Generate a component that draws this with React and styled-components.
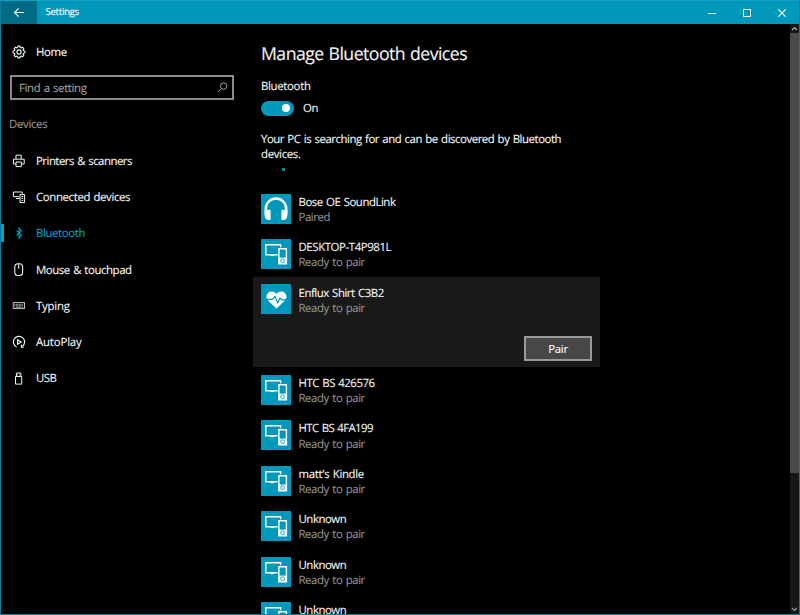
import React from 'react';
import styled, { createGlobalStyle, css } from 'styled-components';

const ACCENT = '#0099bc';

const GlobalStyle = createGlobalStyle`
  *, *::before, *::after { box-sizing: border-box; }
  html, body { margin: 0; padding: 0; background: #000; overflow: hidden; }
  body {
    font-family: "Open Sans", "Noto Sans", sans-serif;
    color: #f4f4f4;
    text-rendering: geometricPrecision;
  }
`;

const Window = styled.div`
  width: 800px;
  height: 615px;
  display: flex;
  flex-direction: column;
  background: #000;
  border: 1px solid #087f9b;
  border-top-color: #19a2c1;
  overflow: hidden;
`;

const TitleBar = styled.header`
  flex: none;
  display: flex;
  height: 23px;
  background: ${ACCENT};
`;

const BackButton = styled.button`
  width: 36px;
  padding: 0;
  border: 0;
  display: flex;
  align-items: center;
  justify-content: center;
  background: #006b84;
  color: #fff;
`;

const Text = styled.span`
  white-space: nowrap;
  letter-spacing: ${({ $ls = -0.32 }) => $ls}px;
  word-spacing: 0.8px;
  -webkit-text-stroke: 0.12px currentColor;
`;

const RowLabel = styled(Text)`
  padding-top: 1.6px;
`;

const WindowTitle = styled(Text)`
  flex: 1;
  padding-left: 8.5px;
  font-size: 9.7px;
  line-height: 22px;
  color: #fff;
`;

const CaptionButton = styled.button`
  width: 35px;
  padding: 0;
  border: 0;
  display: flex;
  align-items: center;
  justify-content: center;
  background: transparent;
  color: #fff;
`;

const Body = styled.div`
  flex: 1;
  min-height: 0;
  display: flex;
`;

const Sidebar = styled.nav`
  flex: none;
  width: 252px;
  display: flex;
  flex-direction: column;
`;

const NavItem = styled.a`
  position: relative;
  flex: none;
  height: 36.3px;
  display: flex;
  align-items: center;
  font-size: 11.4px;
  line-height: 16px;
  color: ${({ $active }) => ($active ? '#0a9cbd' : '#f4f4f4')};

  ${({ $active }) => $active && css`
    &::before {
      content: '';
      position: absolute;
      left: 0;
      top: 9px;
      width: 3px;
      height: 18px;
      background: #00a2c8;
    }
  `}
`;

const HomeItem = styled(NavItem)`
  margin-top: 10px;
`;

const NavIcon = styled.span`
  flex: none;
  width: 35px;
  padding-left: 11px;
  display: flex;

  svg { display: block; }
`;

const SearchBox = styled.div`
  flex: none;
  width: 224px;
  height: 25px;
  margin: 4.7px 0 0 9px;
  padding: 0 4px 0 7px;
  display: flex;
  align-items: center;
  justify-content: space-between;
  border: 2px solid #8b8b8b;
  font-size: 11.4px;
  line-height: 17px;
  color: #a0a0a0;
`;

const SectionTitle = styled.h2`
  flex: none;
  margin: 17.5px 0 9.2px 8px;
  font-size: 11.4px;
  line-height: 16px;
  font-weight: 400;
  color: #959595;
`;

const Content = styled.main`
  flex: 1;
  min-width: 0;
  overflow: hidden;
`;

const PageTitle = styled.h1`
  margin: 18px 0 0 8px;
  font-size: 17.7px;
  line-height: 24px;
  font-weight: 400;
`;

const FieldLabel = styled.div`
  margin: 13px 0 0 8px;
  font-size: 11.4px;
  line-height: 16px;
`;

const ToggleRow = styled.div`
  margin: 5px 0 0 8px;
  height: 16px;
  display: flex;
  align-items: center;
  gap: 9px;
  font-size: 11.4px;
  line-height: 17px;
`;

const Toggle = styled.span`
  width: 33px;
  height: 15px;
  padding: 3px 4px;
  display: flex;
  justify-content: flex-end;
  align-items: center;
  border-radius: 8px;
  background: ${ACCENT};
`;

const Knob = styled.span`
  width: 8px;
  height: 8px;
  border-radius: 50%;
  background: #fff;
`;

const Status = styled.p`
  margin: 16px 0 0 8px;
  display: flex;
  flex-direction: column;
  font-size: 11.4px;
  line-height: 15px;
`;

const Progress = styled.div`
  height: 3px;
  margin: 6px 0 0 28.5px;

  &::before {
    content: '';
    display: block;
    width: 3px;
    height: 3px;
    border-radius: 1px;
    background: #0795b8;
  }
`;

const DeviceList = styled.div`
  margin-top: 15.2px;
  display: flex;
  flex-direction: column;
`;

const Device = styled.section`
  width: 347px;
  height: ${({ $selected }) => ($selected ? 90.5 : 45.4)}px;
  padding: 7.5px 8px 6.8px;
  display: flex;
  flex-direction: column;
  justify-content: space-between;
  background: ${({ $selected }) => ($selected ? '#191919' : 'transparent')};
`;

const DeviceInfo = styled.div`
  height: 30px;
  display: flex;
  gap: 7.5px;
`;

const Tile = styled.span`
  flex: none;
  width: 30px;
  height: 30px;
  background: ${ACCENT};

  svg { display: block; }
`;

const DeviceText = styled.div`
  padding-top: 1.1px;
  display: flex;
  flex-direction: column;
  font-size: 11.4px;
  line-height: 15.2px;
`;

const DeviceState = styled(Text)`
  color: #909090;
`;

const PairButton = styled.button`
  align-self: flex-end;
  width: 68px;
  height: 25px;
  padding: 0;
  border: 2px solid #999;
  background: #474747;
  color: #fff;
  font: 11.4px/21px "Open Sans", sans-serif;
`;

const Scrollbar = styled.div`
  flex: none;
  width: 9px;
  display: flex;
  flex-direction: column;
  align-items: center;
  background: #171717;
`;

const ScrollArrow = styled.span`
  height: 9px;
  width: 9px;
  display: flex;
  align-items: center;
  justify-content: center;
`;

const ScrollThumb = styled.span`
  width: 9px;
  height: 440px;
  margin-bottom: auto;
  background: #4a4a4a;
`;

const Icon = ({ size = 14, w = size, h = size, sw = 1, children, ...rest }) => (
  <svg width={w} height={h} viewBox={`0 0 ${w} ${h}`} fill="none" stroke="currentColor" strokeWidth={sw} {...rest}>
    {children}
  </svg>
);

const GearIcon = () => {
  const pts = [];
  const n = 8;
  for (let i = 0; i < n; i += 1) {
    const a = (i / n) * Math.PI * 2;
    [[-0.27, 4.7], [-0.17, 6], [0.17, 6], [0.27, 4.7]].forEach(([d, r]) => {
      pts.push(`${(7 + r * Math.sin(a + d)).toFixed(2)},${(7 - r * Math.cos(a + d)).toFixed(2)}`);
    });
  }
  return (
    <Icon sw={1.1}>
      <polygon points={pts.join(' ')} strokeLinejoin="round" />
      <circle cx="7" cy="7" r="2.1" />
    </Icon>
  );
};

const PrinterIcon = () => (
  <Icon sw={1}>
    <path d="M4 5.2V1.2h5.2v4M3.8 10H1.4V5.2h10.8V10H9.8M4 8h5.4v4.6H4z" />
  </Icon>
);

const ConnectedIcon = () => (
  <Icon sw={1}>
    <path d="M7.2 6.7H1.4V2h8.8v1.8M4 8.5h3.5" />
    <path d="M8 4.5h4.6v8H8z" />
    <path d="M9.3 6.5h2M9.3 8.3h2M9.5 10.4h1.7" />
  </Icon>
);

const BluetoothIcon = () => (
  <Icon sw={1.1}>
    <path d="M4.5 4.6l5 4.7L7 11.8V2.2l2.5 2.5-5 4.7" />
  </Icon>
);

const MouseIcon = () => (
  <Icon sw={1.05}>
    <rect x="2.8" y="0.8" width="7.8" height="11.6" rx="3" />
    <path d="M6.7 1v4.8" />
  </Icon>
);

const KeyboardIcon = () => (
  <Icon sw={0.9} opacity="0.85">
    <rect x="1.2" y="3.6" width="11.3" height="6" />
    <path d="M2.3 5.3h9M2.3 6.7h9" strokeDasharray="1 0.5" />
    <path d="M2.4 8.2h1M4 8.2h5.7M10.3 8.2h1" />
  </Icon>
);

const AutoPlayIcon = () => (
  <Icon sw={1.15}>
    <path d="M4.6 12A5.6 5.6 0 1 1 10.4 11.4" />
    <path d="M9.4 9.8v2.4h2.4" />
    <path d="M5.6 4.7v4.6L9.2 7z" />
  </Icon>
);

const UsbIcon = () => (
  <Icon sw={1}>
    <path d="M3.5 4.5h6.2v7.6H3.5zM4.4 4.5V1h4.4v3.5" />
    <path d="M5.6 2.5v1M7.6 2.5v1" strokeWidth="0.8" />
  </Icon>
);

const SearchIcon = () => (
  <Icon w={11} h={11} sw={1}>
    <circle cx="6.7" cy="4.1" r="3.2" />
    <path d="M4.4 6.5L.9 10" />
  </Icon>
);

const HeadphonesIcon = () => (
  <Icon size={30} stroke="none">
    <path d="M4.8 19.5V14.7a10.2 10.2 0 0 1 20.4 0v4.8" fill="none" stroke="#fff" strokeWidth="2.4" />
    <path d="M3.6 16.8c1.2-1.2 3.8-1.4 6-.6V26H7.8C5.2 26 4 24.4 3.6 21.5zM26.4 16.8c-1.2-1.2-3.8-1.4-6-.6V26h1.8c2.6 0 3.8-1.6 4.2-4.5z" fill="#fff" />
  </Icon>
);

const DevicesIcon = () => (
  <Icon size={30} stroke="#fff" sw={1.4}>
    <path d="M16.5 15.8H4.8V5.7H19.6v2.6" />
    <path d="M9.5 16.2h3.6" strokeWidth="1.8" />
    <path d="M17.9 9.7h7.5v15h-7.5z" />
    <path d="M17.5 18.6h8.3v6.4h-8.3z" fill="#fff" stroke="none" />
    <circle cx="21.6" cy="21.7" r="1.9" stroke={ACCENT} strokeWidth="0.9" />
  </Icon>
);

const HeartIcon = () => (
  <Icon size={30}>
    <path d="M15.5 24.6L7.2 16.8C4.9 14.4 5 11 7.1 9c2.3-2.2 6-1.8 8.4 1 2.4-2.8 6-3.2 8.3-1 2.1 2 2.2 5.4-.1 7.8z" fill="#fff" stroke="none" />
    <path d="M3.5 15.3h7.9l2.6-3 2.7 6.5 2.3-4.7 1.9 1.7h6" stroke={ACCENT} strokeWidth="1.25" />
  </Icon>
);

const NAV = [
  { label: 'Printers & scanners', icon: PrinterIcon, ls: -0.5 },
  { label: 'Connected devices', icon: ConnectedIcon, ls: -0.36 },
  { label: 'Bluetooth', icon: BluetoothIcon, active: true, ls: -0.38 },
  { label: 'Mouse & touchpad', icon: MouseIcon, ls: -0.42 },
  { label: 'Typing', icon: KeyboardIcon, ls: -0.22 },
  { label: 'AutoPlay', icon: AutoPlayIcon, ls: -0.16 },
  { label: 'USB', icon: UsbIcon, ls: -0.5 },
];

const DEVICES = [
  { name: 'Bose OE SoundLink', state: 'Paired', icon: HeadphonesIcon, ls: -0.45 },
  { name: 'DESKTOP-T4P981L', ls: -0.4 },
  { name: 'Enflux Shirt C3B2', icon: HeartIcon, selected: true, ls: -0.45 },
  { name: 'HTC BS 426576', ls: -0.46 },
  { name: 'HTC BS 4FA199', ls: -0.6 },
  { name: "matt's Kindle", ls: -0.34 },
  { name: 'Unknown', ls: -0.45 },
  { name: 'Unknown', ls: -0.45 },
  { name: 'Unknown', ls: -0.45 },
];

export default function App() {
  return (
    <Window>
      <GlobalStyle />
      <TitleBar>
        <BackButton aria-label="Back">
          <Icon w={12} h={12} sw={1.1}><path d="M11 5.5H1.6M5.6 1.4L1.5 5.5l4.1 4.1" /></Icon>
        </BackButton>
        <WindowTitle>Settings</WindowTitle>
        <CaptionButton aria-label="Minimize">
          <Icon w={8} h={8}><path d="M0 4.5h8" /></Icon>
        </CaptionButton>
        <CaptionButton aria-label="Maximize">
          <Icon w={8} h={8}><path d="M.5.5h7v7h-7z" /></Icon>
        </CaptionButton>
        <CaptionButton aria-label="Close">
          <Icon w={8} h={8} sw={1.1}><path d="M.3.3l7.4 7.4M7.7.3L.3 7.7" /></Icon>
        </CaptionButton>
      </TitleBar>
      <Body>
        <Sidebar>
          <HomeItem>
            <NavIcon><GearIcon /></NavIcon>
            <RowLabel>Home</RowLabel>
          </HomeItem>
          <SearchBox>
            <RowLabel $ls={-0.36}>Find a setting</RowLabel>
            <SearchIcon />
          </SearchBox>
          <SectionTitle><Text>Devices</Text></SectionTitle>
          {NAV.map(({ label, icon: Glyph, active, ls }) => (
            <NavItem key={label} $active={active}>
              <NavIcon><Glyph /></NavIcon>
              <RowLabel $ls={ls}>{label}</RowLabel>
            </NavItem>
          ))}
        </Sidebar>
        <Content>
          <PageTitle><Text $ls={-0.54}>Manage Bluetooth devices</Text></PageTitle>
          <FieldLabel><Text>Bluetooth</Text></FieldLabel>
          <ToggleRow>
            <Toggle><Knob /></Toggle>
            <RowLabel>On</RowLabel>
          </ToggleRow>
          <Status>
            <Text $ls={-0.45}>Your PC is searching for and can be discovered by Bluetooth</Text>
            <Text>devices.</Text>
          </Status>
          <Progress />
          <DeviceList>
            {DEVICES.map(({ name, state = 'Ready to pair', icon: Glyph = DevicesIcon, selected, ls }, i) => (
              <Device key={i} $selected={selected}>
                <DeviceInfo>
                  <Tile><Glyph /></Tile>
                  <DeviceText>
                    <Text $ls={ls}>{name}</Text>
                    <DeviceState $ls={-0.41}>{state}</DeviceState>
                  </DeviceText>
                </DeviceInfo>
                {selected && <PairButton><Text>Pair</Text></PairButton>}
              </Device>
            ))}
          </DeviceList>
        </Content>
        <Scrollbar>
          <ScrollArrow><Icon w={7} h={5} sw={1.2} stroke="#b0b0b0"><path d="M1 4l2.5-2.5L6 4" /></Icon></ScrollArrow>
          <ScrollThumb />
          <ScrollArrow><Icon w={7} h={5} sw={1.2} stroke="#999"><path d="M1 1l2.5 2.5L6 1" /></Icon></ScrollArrow>
        </Scrollbar>
      </Body>
    </Window>
  );
}
